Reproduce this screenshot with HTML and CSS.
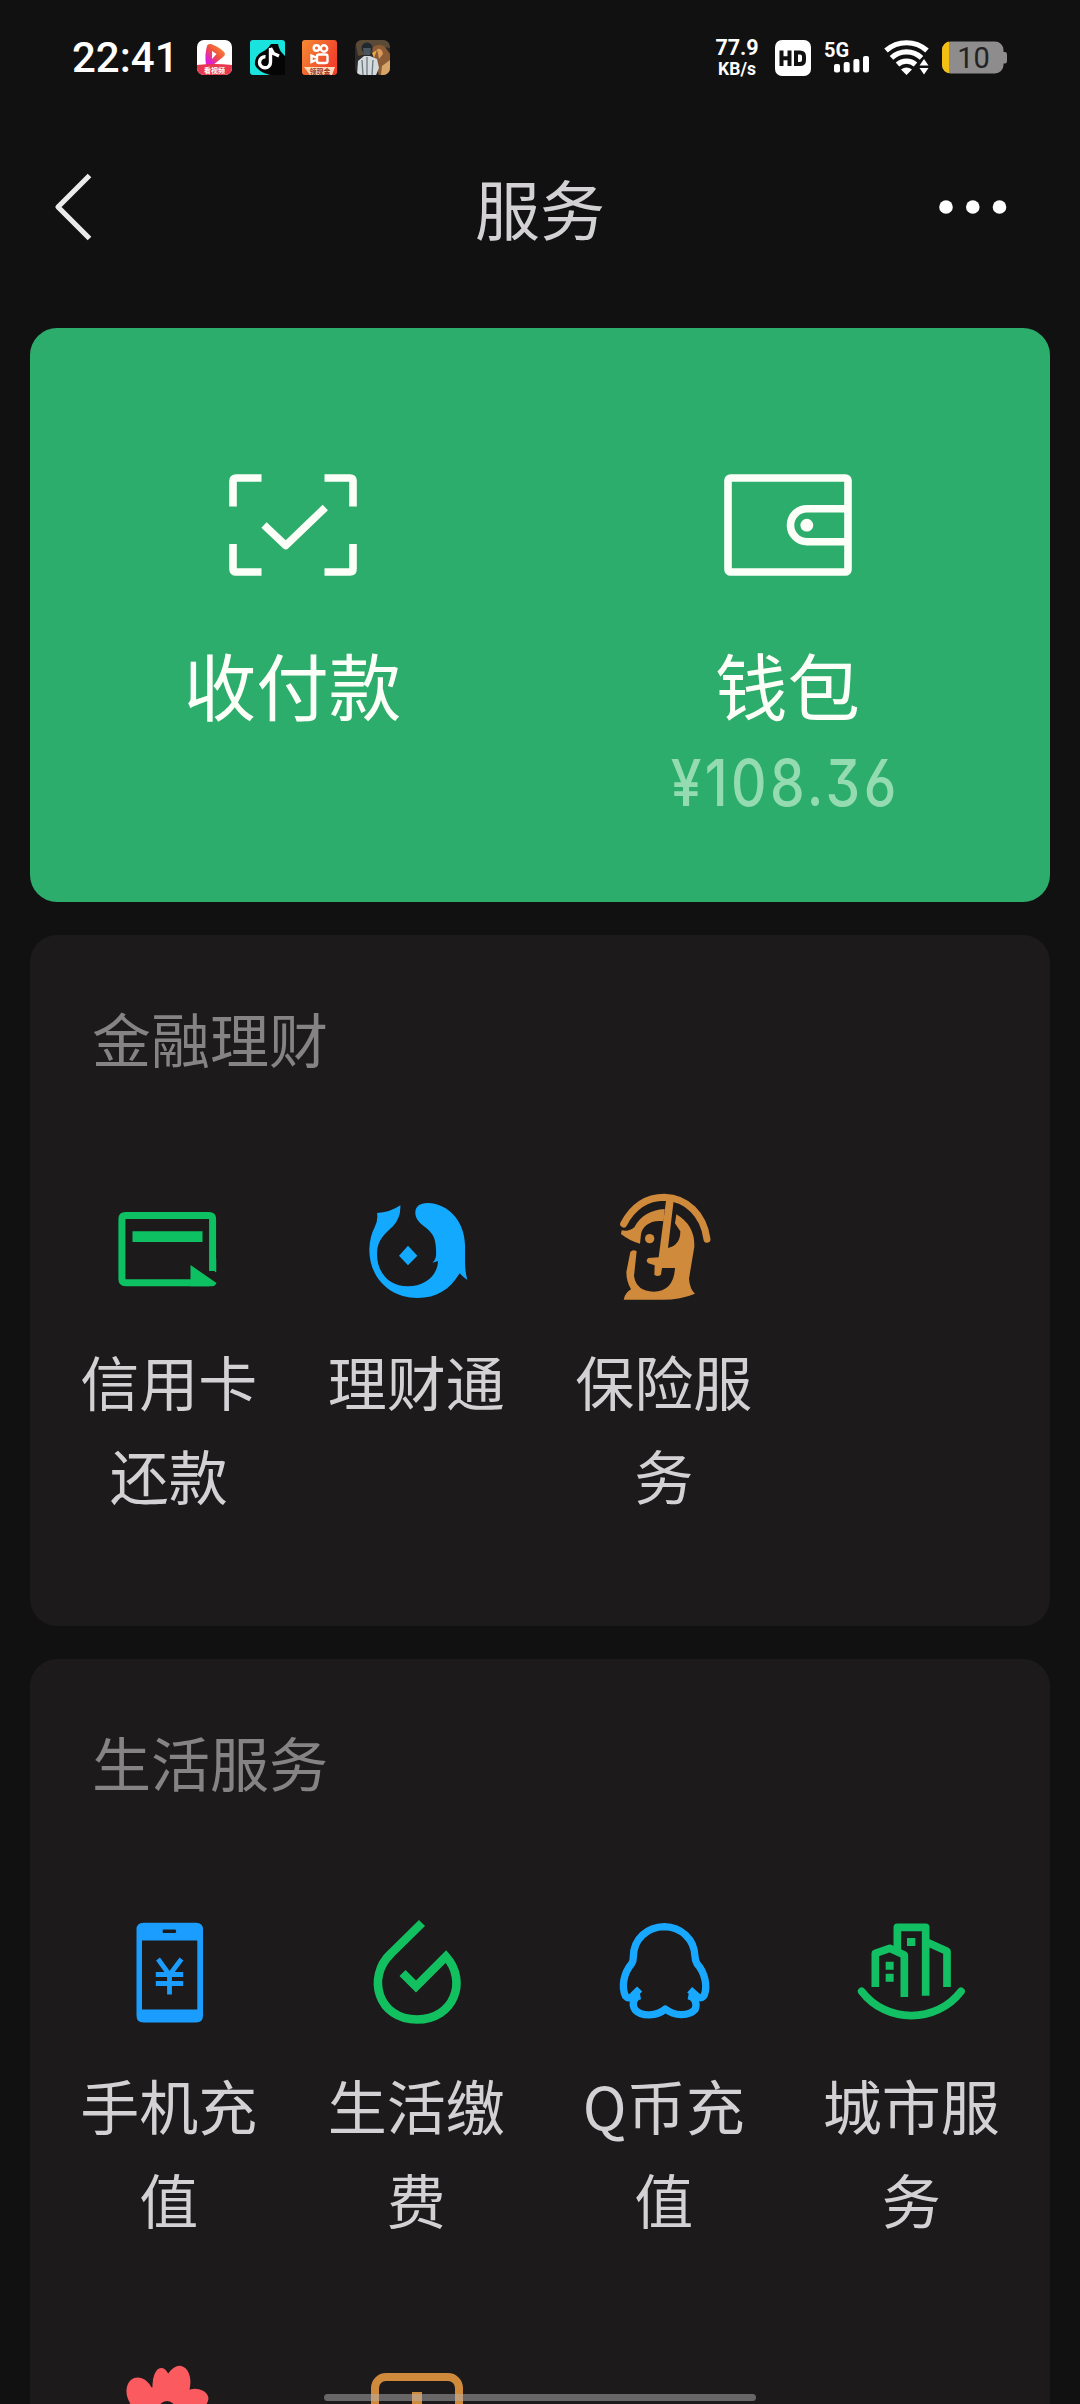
FILE: index.html
```html
<!DOCTYPE html>
<html lang="zh-CN">
<head>
<meta charset="utf-8">
<title>服务</title>
<link rel="stylesheet" href="styles.css">
</head>
<body>
<div class="screen">
  <div class="status">
    <span class="clock">22:41</span>
    <div class="apps">
      <svg viewBox="0 0 35 35">
        <defs>
          <linearGradient id="play" x1="0" y1="1" x2="1" y2="0"><stop offset="0.2" stop-color="#e01fd0"/><stop offset="0.5" stop-color="#f0503c"/><stop offset="1" stop-color="#f7a23a"/></linearGradient>
          <clipPath id="round"><rect width="35" height="35" rx="7"/></clipPath>
        </defs>
        <g clip-path="url(#round)">
          <rect width="35" height="35" fill="#fff"/>
          <path d="M10 6 Q10.500 3.500 14 4 Q25 8 28 13.500 Q28 15.500 26 17 L16 25 H9 Q7.500 14 10 6Z" fill="url(#play)"/>
          <path d="M15 11 L19.500 14 L15 19Z" fill="#fff"/>
          <path d="M0 25 Q17.500 23 35 25 V35 H0Z" fill="#e8384f"/>
        </g>
        <text x="17.500" y="32.500" text-anchor="middle" class="tiny">看视频</text>
      </svg>
      <svg viewBox="0 0 35 35">
        <rect width="35" height="35" rx="3" fill="#19e3dc"/>
        <path d="M35 16 V35 H20 Q8 32 5 25 Q4 16 12 12 Q17 10 21 4 H28 Q29 11 35 16Z" fill="#050505"/>
        <path d="M20.500 8 V22 A5.500 5.500 0 1 1 15.500 16.800 M20.500 8 L23.500 13.500 L29 16" fill="none" stroke="#fff" stroke-width="3.400"/>
      </svg>
      <svg viewBox="0 0 35 35">
        <defs><linearGradient id="ks" x1="0" y1="0" x2="1" y2="0.500"><stop offset="0" stop-color="#f58a33"/><stop offset="1" stop-color="#f2402c"/></linearGradient></defs>
        <rect width="35" height="35" rx="3" fill="url(#ks)"/>
        <g fill="none" stroke="#fff" stroke-width="2.400"><circle cx="14.500" cy="8" r="2.800"/><circle cx="22" cy="8.500" r="3.200"/><rect x="15" y="14.500" width="10.500" height="8.500" rx="2"/><path d="M14 17.500 L9.500 15.500 V22 L14 20"/></g>
        <path d="M2 27 H33 L30 35 H8Z" fill="#f9d9b8"/>
        <text x="18" y="34" text-anchor="middle" class="tiny tiny-dark">领现金</text>
      </svg>
      <svg viewBox="0 0 35 35">
        <g clip-path="url(#round)">
          <rect width="35" height="35" fill="#2c2a2b"/>
          <path d="M0 0 H35 V8 L22 6 L16 13 L3 16Z" fill="#5a4a36"/>
          <path d="M17 8 Q24 2 30 7 L35 14 V35 H24 L19 20Z" fill="#8a5b34"/>
          <path d="M22 9 Q27 8 28 14 L24 19Z" fill="#d99a5c"/>
          <path d="M27 26 L35 20 V35 H26Z" fill="#d8a468"/>
          <path d="M17 13 L22 10 L19 18Z" fill="#e9a842"/>
          <circle cx="12" cy="8" r="5.500" fill="#202830"/>
          <path d="M8 8 H16 L15 15 H9Z" fill="#4a5660"/>
          <path d="M3 21 L9 16 H15 L22 19 L24 28 L21 35 H2Z" fill="#d3dade"/>
          <path d="M12 17 V35 M7 20 L8 35 M18 20 L17 35" stroke="#6d777d" stroke-width="1.300"/>
        </g>
      </svg>
    </div>
    <div class="indicators">
      <div class="speed"><span>77.9</span><span class="unit">KB/s</span></div>
      <svg class="hd" viewBox="0 0 36 36"><rect width="36" height="36" rx="7" fill="#fff"/><path d="M6.500 10.500 V26 M14.500 10.500 V26 M6.500 18.200 H14.500 M21 12.500 H25 Q29 12.500 29 16.500 V20 Q29 24 25 24 H21Z" fill="none" stroke="#111" stroke-width="4"/></svg>
      <div class="signal"><span>5G</span>
        <svg viewBox="0 0 36 17"><g fill="#fff"><rect x="0" y="8" width="6" height="8.500" rx="2"/><rect x="9.700" y="6" width="6" height="10.500" rx="2"/><rect x="19.400" y="3" width="6" height="13.500" rx="2"/><rect x="29" y="0" width="6" height="16.500" rx="2"/></g></svg>
      </div>
      <svg class="wifi" viewBox="0 0 46 36">
        <g fill="none" stroke="#fff" stroke-width="5.200"><path d="M2 10.500 A31 31 0 0 1 43 10.500"/><path d="M7.500 17.800 A22 22 0 0 1 37.500 17.800"/><path d="M13.500 24.500 A13.500 13.500 0 0 1 31.500 24.500"/></g>
        <path d="M17 29.500 Q22.500 25.500 28 29.500 L22.500 35Z M35.500 25.500 L40 19 L44.500 25.500Z M35.500 28 H44.500 L40 34.500Z" fill="#fff"/>
      </svg>
      <svg class="battery" viewBox="0 0 66 34">
        <defs><clipPath id="cell"><rect y="0.500" width="61.500" height="32" rx="8.500"/></clipPath></defs>
        <path d="M60 11 H63 Q65 11 65 14 V19.500 Q65 22.500 63 22.500 H60Z" fill="#8e8c8d"/>
        <g clip-path="url(#cell)"><rect width="62" height="34" fill="#8e8c8d"/><rect width="7" height="34" fill="#f2bf12"/></g>
        <text x="31.500" y="27" text-anchor="middle" class="level">10</text>
      </svg>
    </div>
  </div>

  <header class="nav">
    <svg class="back" viewBox="0 0 40 70"><path d="M36.500 3.500 L5 35 L36.500 66.500" fill="none" stroke="#ebebeb" stroke-width="5.200" stroke-linejoin="round"/></svg>
    <h1>服务</h1>
    <svg class="more" viewBox="0 0 68 14"><g fill="#fff"><circle cx="7" cy="7" r="6.800"/><circle cx="33.800" cy="7" r="6.800"/><circle cx="60.500" cy="7" r="6.800"/></g></svg>
  </header>

  <section class="card pay">
    <div class="pay-item">
      <svg viewBox="0 0 128 102"><g fill="none" stroke="#fcfff8" stroke-width="7.600"><path d="M4 32.500 V7 Q4 4 7 4 H32.500"/><path d="M95.500 4 H121 Q124 4 124 7 V32.500"/><path d="M124 70 V95 Q124 98 121 98 H95.500"/><path d="M32.500 98 H7 Q4 98 4 95 V70"/><path d="M35 51 L56.700 71.500 L96.300 33.500" stroke-linejoin="round"/></g></svg>
      <span class="pay-name">收付款</span>
    </div>
    <div class="pay-item">
      <svg viewBox="0 0 128 102"><g fill="none" stroke="#fcfff8" stroke-width="7.600"><rect x="4" y="4" width="120" height="94" rx="2.500"/><path d="M122 34.700 H83 A16.500 16.500 0 0 0 83 67.700 H122"/></g><circle cx="82.800" cy="51.200" r="6.400" fill="#fcfff8"/></svg>
      <span class="pay-name">钱包</span>
      <span class="balance">¥108.36</span>
    </div>
  </section>

  <section class="card finance">
    <h2>金融理财</h2>
    <div class="grid">
      <div class="item">
        <svg viewBox="0 0 120 120"><path d="M103.600 82 V30 Q103.600 26.400 100 26.400 H16.500 Q12.900 26.400 12.900 30 V90 Q12.900 93.700 16.500 93.700 H100" fill="none" stroke="#0dc162" stroke-width="7"/><path d="M23.500 42.300 H93.500 V53 H23.500Z M100 78 L107.200 83.500 V70Z M81.500 76 L107.500 94 Q106.500 97 103 97.200 H81.500Z" fill="#0dc162"/></svg>
        <span>信用卡还款</span>
      </div>
      <div class="item">
        <svg viewBox="49 27 360 360"><path d="M112 99 Q150 98 182 76 Q184 112 160 139 C138 160 112 178 112 222 C112 280 150 319 204 319 C256 319 294 286 295 243 L278 248 C292 236 290 222 288 196 C286 174 280 160 256 141 C236 126 227 114 227 98 C227 80 240 69 264 69 C330 70 376 130 376 196 V244 Q376 274 383 300 Q371 292 360 280 C330 330 290 354 234 354 C146 354 88 288 89 208 Q90 170 105 142 Q116 120 112 99Z M205 197 L233 227 L205 256 L178 227Z" fill="#13a9ff"/></svg>
        <span>理财通</span>
      </div>
      <div class="item">
        <svg viewBox="791 27 360 360"><g fill="#cf8a3c"><path d="M850 132 C882 72 928 52 972 52 C1040 54 1090 104 1100 178" fill="none" stroke="#cf8a3c" stroke-width="21" stroke-linecap="round"/><path d="M882 142 C900 108 930 90 973 87 L970 124 C930 118 906 140 902 162 L899 191 Q870 184 842 162 L844 151 Q866 156 882 142Z"/><circle cx="928" cy="176" r="14"/><path d="M977 62 H1000 L983 204 Q1020 196 1020 154 L1004 130 L1008 103 Q1064 136 1062 200 L1046 296 Q1048 326 1064 341 Q1020 360 960 359 H850 Q854 338 872 328 Q858 304 858 276 L870 216 Q878 206 889 214 L881 288 Q888 334 940 335 Q1000 334 1004 264 H965 L962 284 Q952 292 942 284 L943 256 L924 250 Q914 242 924 234 L955 232Z"/></g></svg>
        <span>保险服务</span>
      </div>
    </div>
  </section>

  <section class="card life">
    <h2>生活服务</h2>
    <div class="grid">
      <div class="item">
        <svg viewBox="0 0 120 120"><path fill-rule="evenodd" d="M34.500 9.700 H87 Q94 9.700 94 16.500 V102.500 Q94 109.500 87 109.500 H34.500 Q27.500 109.500 27.500 102.500 V16.500 Q27.500 9.700 34.500 9.700Z M33 27.500 V96.500 H88.300 V27.500Z M54 16.500 Q53 18.200 54 20 H66.500 Q68 18.200 66.500 16.500Z" fill="#1a9dff"/><path d="M49 46 L60.500 62 L72.500 46 M46.800 61.500 H74.200 M46.800 70.500 H74.200 M60.500 60 V81.500" fill="none" stroke="#1a9dff" stroke-width="4.800"/></svg>
        <span>手机充值</span>
      </div>
      <div class="item">
        <svg viewBox="0 0 120 120"><path d="M66 10 L35 40.500 C10 64 22 106.500 61 106.500 C98 106.500 112 68 90 43.500 L60 73.500 L46.500 60" fill="none" stroke="#12c060" stroke-width="8.600"/></svg>
        <span>生活缴费</span>
      </div>
      <div class="item">
        <svg viewBox="131 98 360 360"><path d="M238 326 L218 346 Q204 358 196 348 C182 320 190 278 214 250 Q219 242 219 230 C219 174 262 140 312 139 C362 140 402 176 404 228 Q404 240 410 250 C434 276 442 318 432 344 Q424 358 410 348 L388 328 M240 346 C218 350 214 372 224 388 C244 410 290 408 315 386 C342 408 386 408 404 388 C412 370 404 350 384 346" fill="none" stroke="#18a8ff" stroke-width="22" stroke-linejoin="round"/></svg>
        <span>Q币充值</span>
      </div>
      <div class="item">
        <svg viewBox="872 98 360 360"><g fill="none" stroke="#12bf62" stroke-width="23" stroke-linejoin="round"><path d="M904 333 C978 430 1128 430 1202 333" stroke-linecap="round"/><path d="M945 320 V219 L988 204 L1032 224 V350"/><path d="M1011 208 V141 H1096 V346"/><path d="M1100 186 L1160 213 V320"/></g><path d="M1040 173 H1065 V197 H1040Z M976 244 H1000 V268 H976Z M976 280 H1000 V304 H976Z" fill="#12bf62"/></svg>
        <span>城市服务</span>
      </div>
      <div class="item">
        <svg viewBox="0 0 120 120"><g fill="#fb5b5f"><ellipse cx="53" cy="34" rx="9.500" ry="19" transform="rotate(-3 53 34)"/><ellipse cx="68" cy="33" rx="13" ry="20.500" transform="rotate(12 68 33)"/><ellipse cx="31" cy="41" rx="13" ry="17" transform="rotate(-20 31 41)"/><ellipse cx="84" cy="47" rx="15.500" ry="11" transform="rotate(-10 84 47)"/><circle cx="27" cy="62" r="13"/><circle cx="91" cy="66" r="13"/><path d="M40 34 L80 38 L84 70 H34Z"/></g><circle cx="58" cy="57" r="9" fill="#1c1a1b"/></svg>
      </div>
      <div class="item">
        <svg viewBox="0 0 120 120"><rect x="19" y="24" width="84" height="82" rx="11" fill="none" stroke="#cf8a3c" stroke-width="8"/><path d="M61 39 V92 M48 58 H74" stroke="#cf8a3c" stroke-width="10"/></svg>
      </div>
    </div>
  </section>
  <div class="home-bar"></div>
</div>
</body>
</html>
```
FILE: styles.css
```css
* { box-sizing: border-box; margin: 0; padding: 0; }
body { background: #111112; }
.screen {
  position: relative;
  width: 1080px;
  height: 2404px;
  overflow: hidden;
  font-family: "Noto Sans CJK SC", "Noto Sans", sans-serif;
  font-weight: 400;
  color: #d3d1d4;
}
svg { display: block; flex: none; }

.status {
  display: flex;
  align-items: center;
  height: 115px;
  padding: 0 72px;
  font-family: Roboto, sans-serif;
  color: #fff;
}
.clock { width: 125px; font-size: 42px; font-weight: 500; line-height: 50px; white-space: nowrap; }
.apps { display: flex; gap: 17.500px; }
.apps svg { width: 35px; height: 35px; }
.tiny { font: 700 7px "Noto Sans CJK SC", sans-serif; fill: #fff; }
.tiny-dark { fill: #a03020; }
.indicators { display: flex; align-items: center; margin-left: auto; }
.speed { display: flex; flex-direction: column; align-items: center; width: 44px; margin-right: 16px; font-size: 21.500px; font-weight: 700; line-height: 22px; }
.speed .unit { font-size: 17.500px; line-height: 20px; }
.hd { width: 36px; height: 36px; margin-right: 13px; }
.signal { width: 47px; margin-right: 13px; }
.signal span { display: block; height: 14px; font-size: 20px; font-weight: 700; line-height: 16px; }
.signal svg { width: 36px; height: 17px; margin-left: 10px; }
.wifi { width: 46px; height: 36px; margin-right: 12px; }
.battery { width: 66px; height: 34px; }
.level { font: 400 29px Roboto, sans-serif; fill: #232223; }

.nav {
  display: grid;
  grid-template-columns: 100px 1fr 100px;
  align-items: center;
  height: 184px;
  padding: 0 53px;
}
.back { width: 40px; height: 70px; }
.nav h1 { font-size: 65px; line-height: 90px; font-weight: 400; text-align: center; }
.more { width: 68px; height: 14px; justify-self: end; margin-right: 20px; }

.card {
  margin: 0 30px 33px;
  padding: 0 15px;
  border-radius: 27px;
  background: #1c1a1b;
}
.pay {
  display: flex;
  height: 574px;
  margin-top: 29px;
  padding-top: 146px;
  background: #2dad6c;
  color: #fcfff8;
}
.pay-item { flex: 1; display: flex; flex-direction: column; align-items: center; }
.pay-item svg { width: 128px; height: 102px; margin-bottom: 58px; }
.pay-name { font-size: 72.500px; line-height: 100px; }
.balance {
  margin: 4px 4px 0 0;
  font-family: Inter, sans-serif;
  font-feature-settings: "cv03", "cv09";
  font-size: 64px;
  line-height: 90px;
  font-weight: 450;
  letter-spacing: 4px;
  color: #95dbb1;
  transform: scaleX(0.86);
}
.card h2 { padding: 58px 0 0 47px; font-size: 59px; line-height: 90px; font-weight: 400; color: #858384; }
.grid { display: grid; grid-template-columns: repeat(4, 1fr); grid-auto-rows: 440px; padding-top: 106px; }
.finance { height: 691px; }
.life { height: 900px; margin-bottom: 0; }
.item { display: flex; flex-direction: column; align-items: center; gap: 25px; }
.item svg { width: 120px; height: 120px; }
.item span { width: 200px; font-size: 59px; line-height: 94px; text-align: center; word-break: break-all; }

.home-bar {
  position: absolute;
  left: 324px;
  bottom: 3px;
  width: 432px;
  height: 7px;
  border-radius: 4px;
  background: rgba(180, 178, 179, 0.5);
}
```
